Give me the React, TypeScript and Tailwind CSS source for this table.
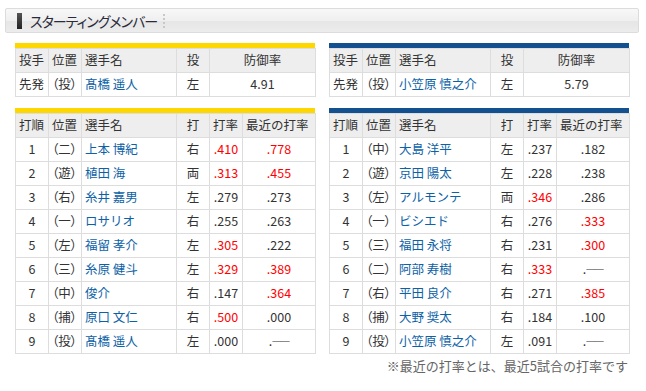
import React from "react";

const FONT = "font-['Noto_Sans_CJK_JP','Noto_Sans',sans-serif]";

const pitcherL = ["先発", "（投）", "髙橋 遥人", "左", "4.91"];
const pitcherR = ["先発", "（投）", "小笠原 慎之介", "左", "5.79"];

type Row = [string, string, string, string, string, boolean, string, boolean];
const lineupL: Row[] = [
  ["1", "（二）", "上本 博紀", "右", ".410", true, ".778", true],
  ["2", "（遊）", "植田 海", "両", ".313", true, ".455", true],
  ["3", "（右）", "糸井 嘉男", "左", ".279", false, ".273", false],
  ["4", "（一）", "ロサリオ", "右", ".255", false, ".263", false],
  ["5", "（左）", "福留 孝介", "左", ".305", true, ".222", false],
  ["6", "（三）", "糸原 健斗", "左", ".329", true, ".389", true],
  ["7", "（中）", "俊介", "右", ".147", false, ".364", true],
  ["8", "（捕）", "原口 文仁", "右", ".500", true, ".000", false],
  ["9", "（投）", "髙橋 遥人", "左", ".000", false, ".---", false],
];
const lineupR: Row[] = [
  ["1", "（中）", "大島 洋平", "左", ".237", false, ".182", false],
  ["2", "（遊）", "京田 陽太", "左", ".228", false, ".238", false],
  ["3", "（左）", "アルモンテ", "両", ".346", true, ".286", false],
  ["4", "（一）", "ビシエド", "右", ".276", false, ".333", true],
  ["5", "（三）", "福田 永将", "右", ".231", false, ".300", true],
  ["6", "（二）", "阿部 寿樹", "右", ".333", true, ".---", false],
  ["7", "（右）", "平田 良介", "右", ".271", false, ".385", true],
  ["8", "（捕）", "大野 奨太", "右", ".184", false, ".100", false],
  ["9", "（投）", "小笠原 慎之介", "左", ".091", false, ".---", false],
];

const th =
  "h-[24px] border border-[#dddddd] bg-[#eeeeee] font-normal px-[3px] py-0 text-[#333333] whitespace-nowrap overflow-visible";
const td =
  "h-[24px] border border-[#dddddd] px-[3px] py-0 text-[#333333] whitespace-nowrap overflow-visible";
const pos = "[font-feature-settings:'palt'] text-left";

function Val({ v }: { v: string }) {
  if (v === ".---") {
    return (
      <span>
        .<span className="relative top-[-2px] font-['Liberation_Sans',sans-serif] text-[9px] tracking-[-0.5px]">——</span>
      </span>
    );
  }
  return <>{v}</>;
}

function PitcherTable({ bar, data }: { bar: string; data: string[] }) {
  return (
    <div className="w-[300px]">
      <div className={`h-[5px] ${bar}`} />
      <table className="w-[300px] table-fixed border-collapse text-[12.5px] leading-none">
        <colgroup>
          <col className="w-[33px]" />
          <col className="w-[33px]" />
          <col className="w-[95px]" />
          <col className="w-[33px]" />
          <col className="w-[106px]" />
        </colgroup>
        <thead>
          <tr>
            <th className={`${th} text-left`}>投手</th>
            <th className={`${th} text-left`}>位置</th>
            <th className={`${th} text-left`}>選手名</th>
            <th className={`${th} text-center`}>投</th>
            <th className={`${th} text-center`}>防御率</th>
          </tr>
        </thead>
        <tbody>
          <tr>
            <td className={`${td} text-left`}>{data[0]}</td>
            <td className={`${td} ${pos}`}>{data[1]}</td>
            <td className={`${td} text-left !text-[#0d62a6]`}>{data[2]}</td>
            <td className={`${td} text-center`}>{data[3]}</td>
            <td className={`${td} text-center`}>{data[4]}</td>
          </tr>
        </tbody>
      </table>
    </div>
  );
}

function LineupTable({ bar, rows }: { bar: string; rows: Row[] }) {
  return (
    <div className="w-[300px]">
      <div className={`h-[5px] ${bar}`} />
      <table className="w-[300px] table-fixed border-collapse text-[12.5px] leading-none">
        <colgroup>
          <col className="w-[33px]" />
          <col className="w-[33px]" />
          <col className="w-[95px]" />
          <col className="w-[33px]" />
          <col className="w-[33px]" />
          <col className="w-[73px]" />
        </colgroup>
        <thead>
          <tr>
            <th className={`${th} text-left`}>打順</th>
            <th className={`${th} text-left`}>位置</th>
            <th className={`${th} text-left`}>選手名</th>
            <th className={`${th} text-center`}>打</th>
            <th className={`${th} text-left`}>打率</th>
            <th className={`${th} text-left`}>最近の打率</th>
          </tr>
        </thead>
        <tbody>
          {rows.map((r) => (
            <tr key={r[0]}>
              <td className={`${td} text-center`}>{r[0]}</td>
              <td className={`${td} ${pos}`}>{r[1]}</td>
              <td className={`${td} text-left !text-[#0d62a6]`}>{r[2]}</td>
              <td className={`${td} text-center`}>{r[3]}</td>
              <td className={`${td} text-center ${r[5] ? "!text-[#ff0000]" : ""}`}>
                <Val v={r[4]} />
              </td>
              <td className={`${td} text-center ${r[7] ? "!text-[#ff0000]" : ""}`}>
                <Val v={r[6]} />
              </td>
            </tr>
          ))}
        </tbody>
      </table>
    </div>
  );
}

export default function App() {
  return (
    <div className={`w-[646px] h-[391px] bg-white ${FONT} overflow-hidden`}>
      <div className="pt-[8px] pl-[5px]">
        <div className="w-[634px] h-[25px] border border-[#dcdcdc] rounded-[2px] bg-[linear-gradient(#f8f8f8,#efefef_50%,#e6e6e6_55%,#ececec)] flex items-center">
          <div className="ml-[11px] w-[5px] h-[16px] bg-[linear-gradient(#555555,#222222)]" />
          <div className="ml-[8px] text-[14px] leading-none text-[#2a2a3a] tracking-[-1px] [font-feature-settings:'palt']">
            スターティングメンバー
          </div>
          <div className="ml-[6px] h-[14px] border-l-2 border-dotted border-[#c8c8c8]" />
        </div>
      </div>
      <div className="pl-[15px] mt-[10px] flex gap-[14px]">
        <PitcherTable bar="bg-[#ffd700]" data={pitcherL} />
        <PitcherTable bar="bg-[#12508f]" data={pitcherR} />
      </div>
      <div className="pl-[15px] mt-[11px] flex gap-[14px]">
        <LineupTable bar="bg-[#ffd700]" rows={lineupL} />
        <LineupTable bar="bg-[#12508f]" rows={lineupR} />
      </div>
      <div className="w-[628px] text-right text-[13px] leading-none text-[#666666] mt-[5px]">
        ※最近の打率とは、最近5試合の打率です
      </div>
    </div>
  );
}
